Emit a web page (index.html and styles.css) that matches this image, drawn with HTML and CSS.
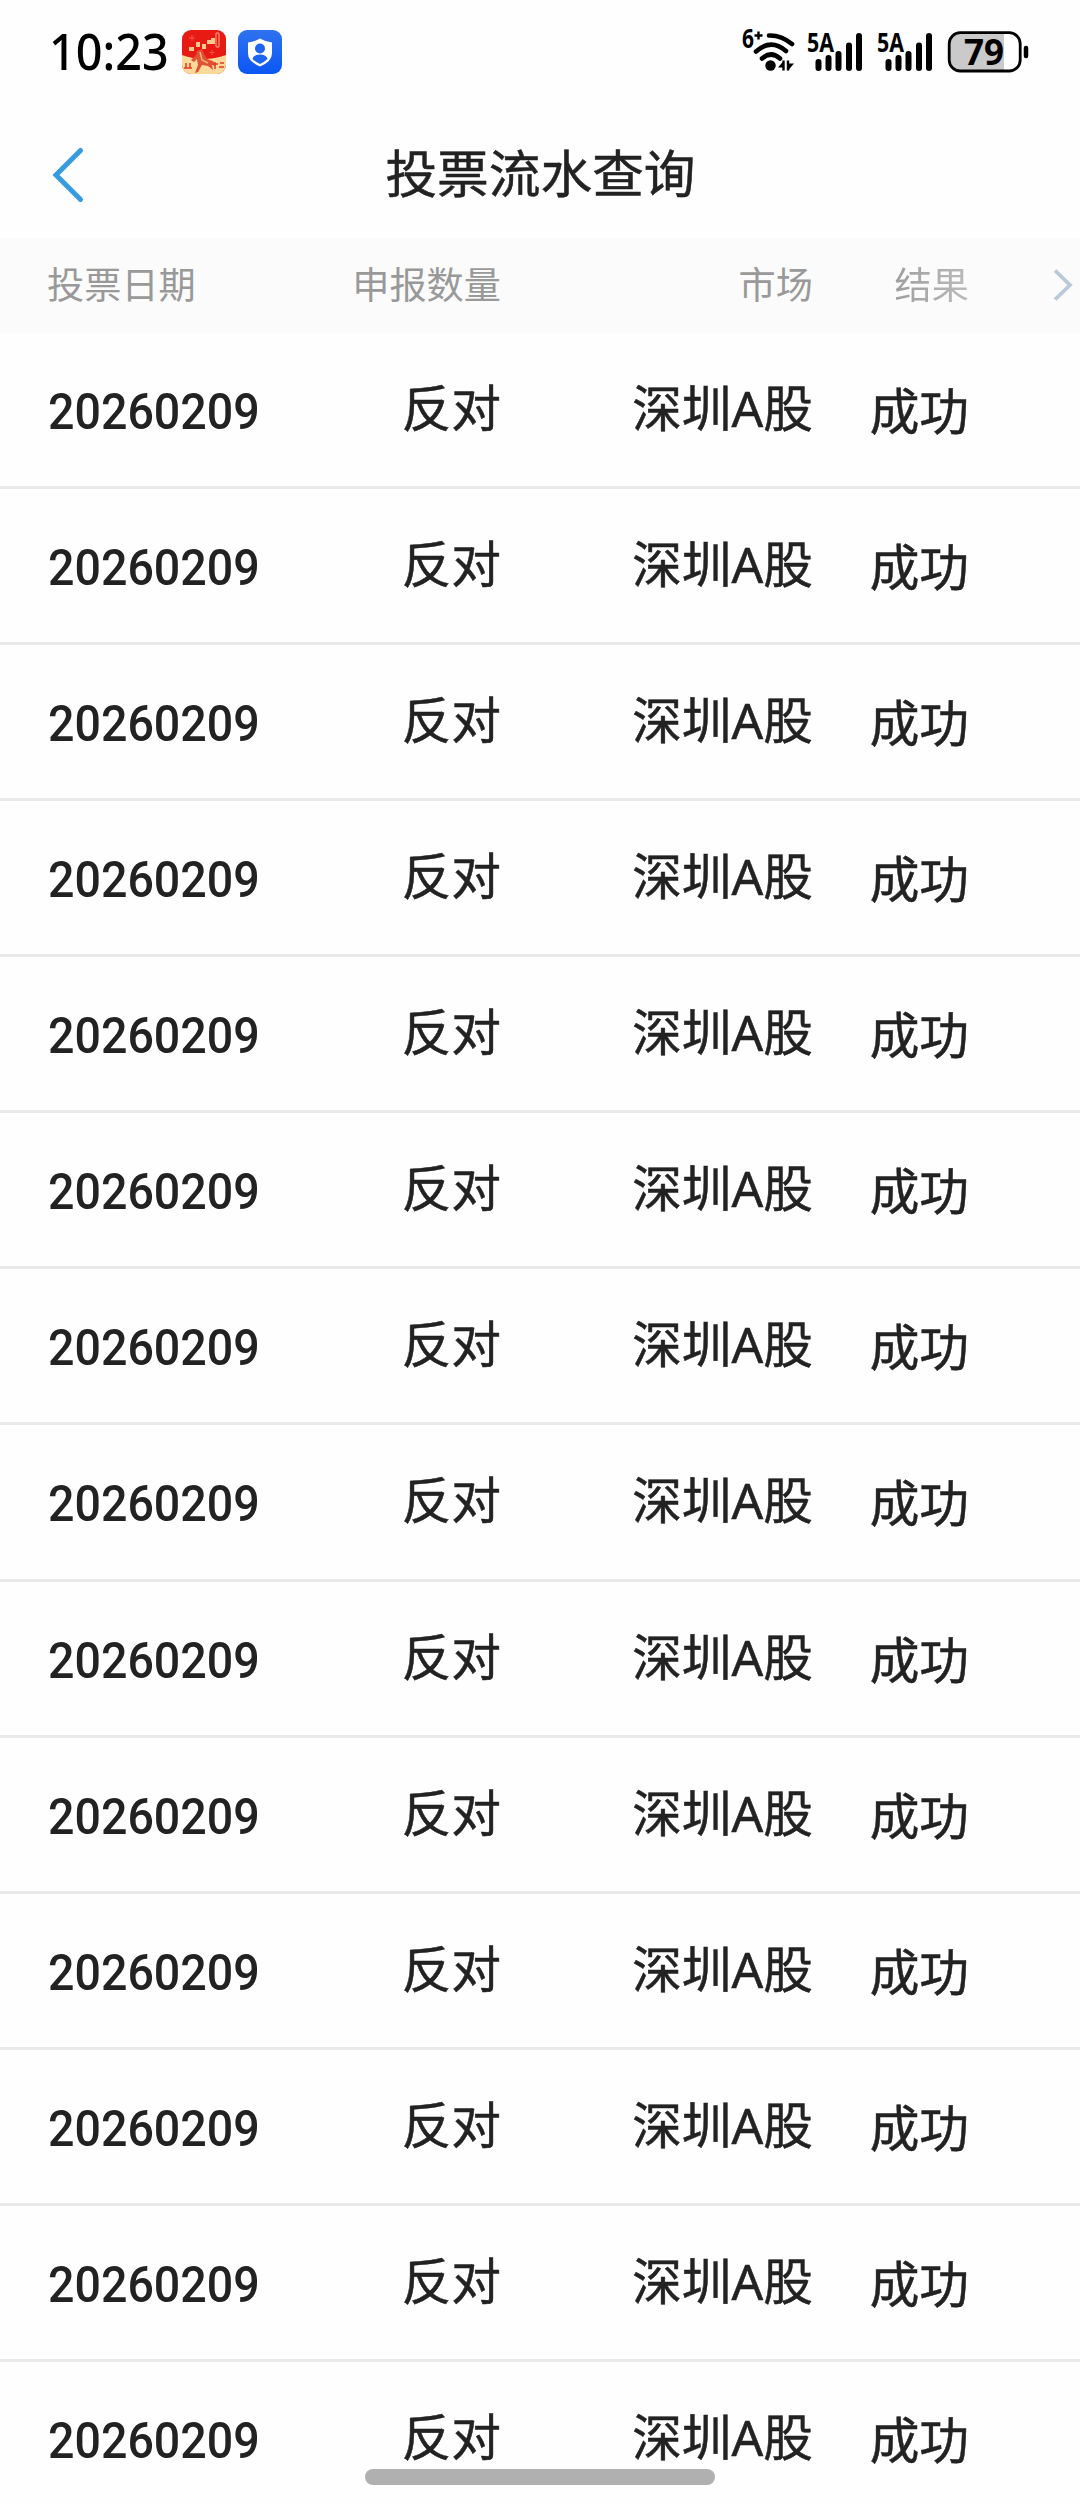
FILE: index.html
```html
<!DOCTYPE html>
<html lang="zh-CN">
<head>
<meta charset="utf-8">
<title>投票流水查询</title>
<link rel="stylesheet" href="styles.css">
</head>
<body>
<div class="screen">
  <div class="status">
    <span class="clock">10:23</span>
    <svg class="app" width="44" height="44" viewBox="0 0 44 44">
      <defs><clipPath id="r"><rect width="44" height="44" rx="9"/></clipPath></defs>
      <g clip-path="url(#r)">
        <rect width="44" height="44" fill="#e71a14"/>
        <path d="M0 25Q22 33 44 25V44H0z" fill="#fbd99a"/>
        <path d="M7 17h5v4H7zM14 12h4v5h-4zM20 14h4v5h-4zM25 10h4v4h-4zM29 8h4v6h-4z" fill="#f8c98c"/>
        <rect x="34" y="3" width="3" height="14" rx="1" fill="none" stroke="#f98a70" stroke-width="1.3"/>
        <path d="M10 5v6M7 8h6M30 20v5M27.500 22.500h5" stroke="#f4564a"/>
        <path d="M15 21l5-2 2 5 3 5 6 2 3 5-4-1 1 5-5-4-6-1-4 7-3 1 3-8-1-6-3 3-3-2 5-5z" fill="#df5235"/>
        <path d="M18 22l2 8 6 3" fill="none" stroke="#ffb170" stroke-width="1.500"/>
        <path d="M4 33v5M2 38h8M8 33v5M31 34h5M33 32v7M38 33h4M37 37h5" stroke="#e43a25" stroke-width="1.500"/>
      </g>
    </svg>
    <svg class="app" width="44" height="44" viewBox="0 0 44 44">
      <defs><linearGradient id="b" x2="0" y2="1"><stop stop-color="#2f72ef"/><stop offset="1" stop-color="#0b57f5"/></linearGradient></defs>
      <rect width="44" height="44" rx="9" fill="url(#b)"/>
      <path d="M22 8.500q6 3.500 12 4v11q0 8-12 13-12-5-12-13v-11q6-.5 12-4z" fill="#fff"/>
      <circle cx="22" cy="18.500" r="5" fill="#1c65f2"/>
      <path d="M14.500 29q1-4.500 7.500-4.500t7.500 4.500q-3 3-7.500 5-4.500-2-7.500-5z" fill="#1c65f2"/>
    </svg>
    <svg class="signals" width="310" height="66" viewBox="740 10 310 66">
      <g fill="none" stroke="#000" stroke-width="4.600" stroke-linecap="round">
        <path d="M769 35.500Q781 35 792 44M756 51.500Q771 38 786 51M762 58.500Q771 50.500 780 58.500"/>
      </g>
      <circle cx="770.500" cy="65.500" r="5.200"/>
      <path d="M783.500 60.500v10M788 60.500v10" stroke="#000" stroke-width="2.400"/>
      <path d="M784 60.500v7h-6zM788 63.500h6l-6 7z"/>
      <text class="tag" x="742" y="48" textLength="12" lengthAdjust="spacingAndGlyphs">6</text>
      <path d="M754.500 35.500h8M758.500 31.500v8" stroke="#000" stroke-width="2.400"/>
      <g id="cell">
        <text class="tag" x="807" y="51.500" textLength="27" lengthAdjust="spacingAndGlyphs">5A</text>
        <path d="M818.500 62v6M828.500 58v10M838.500 54v14M849 45.500v22.500M859 36v32" stroke="#000" stroke-width="6" stroke-linecap="round"/>
      </g>
      <use href="#cell" x="70"/>
      <path d="M960 33h44v38h-44q-11 0-11-11V44q0-11 11-11z" fill="#cacaca"/>
      <rect x="949.200" y="32.700" width="71" height="38.300" rx="11" fill="none" stroke="#000" stroke-width="2.800"/>
      <path d="M1026 48v8" stroke="#000" stroke-width="4.500" stroke-linecap="round"/>
      <text class="level" x="964" y="65" textLength="40" lengthAdjust="spacingAndGlyphs">79</text>
    </svg>
  </div>
  <header class="nav">
    <svg class="back" width="36" height="60" viewBox="0 0 36 60"><path d="M30.500 5.500L6 30 30.500 54.500" fill="none" stroke="#379be0" stroke-width="5" stroke-linecap="round"/></svg>
    <h1>投票流水查询</h1>
  </header>
  <div class="row head">
    <span>投票日期</span><span class="num">申报数量</span><span class="num">市场</span><span class="num result">结果</span>
    <svg class="more" width="22" height="34" viewBox="0 0 22 34"><path d="M2 2.500L17 17 2 31.500" fill="none" stroke="#b9c9da" stroke-width="3.800"/></svg>
  </div>
  <main class="list" id="list"></main>
  <div class="homebar"></div>
</div>
<script src="app.js"></script>
</body>
</html>
```
FILE: styles.css
```css
* { box-sizing: border-box; }
body { margin: 0; background: #fff; }
.screen {
  position: relative;
  width: 1080px;
  height: 2504px;
  overflow: hidden;
  background: #fefefe;
  color: #222;
  font-family: "Noto Sans CJK SC", sans-serif;
}
.status { display: flex; height: 120px; padding: 0 30px 0 49px; color: #000; }
.clock { width: 133px; font: 500 50px/50px "Noto Sans", sans-serif; padding-top: 26px; white-space: nowrap; transform: scaleX(.935); transform-origin: left; }
.app { margin: 30px 12px 0 0; flex: none; }
.signals { margin: 10px 0 0 auto; flex: none; }
.tag { font: 700 26px "Noto Sans", sans-serif; }
.level { font: 700 35px "Open Sans", sans-serif; }
.nav { display: flex; justify-content: center; align-items: center; position: relative; height: 119px; }
.nav h1 { margin: -17px 0 0 1px; font-size: 51.7px; line-height: 76px; font-weight: 400; -webkit-text-stroke: .5px #222; }
.back { position: absolute; left: 50px; top: 25px; }
.row {
  display: grid;
  grid-template-columns: 253px 200px 312px 156px 1fr;
  align-items: center;
  height: 156.070px;
  padding-left: 48px;
  border-bottom: 3px solid #e9e9e9;
  font-size: 49.7px;
  line-height: 72px;
  white-space: nowrap;
}
.num { text-align: right; margin-top: -3px; }
.list .num { -webkit-text-stroke: .5px #222; }
.head { height: 94px; border: 0; background: #fbfbfb; color: #999; font-size: 37.2px; }
.head span { margin-top: -7px; }
.head span:first-child { margin-left: -1px; }
.result { background: linear-gradient(90deg, #999 45%, #bbb); background-clip: text; color: transparent; }
.more { justify-self: end; margin: -2px 5px 0 0; }
.date { font: 500 50.5px/72px Roboto, sans-serif; transform: scaleX(.922); transform-origin: left; padding-top: 5px; }
.list .raised { margin-top: -9px; }
.latin { font-family: "Noto Sans", sans-serif; line-height: 1; }
.homebar { position: absolute; left: 365px; top: 2469px; width: 350px; height: 16px; border-radius: 8px; background: #b0b0b0; }
```
FILE: app.js
```js
const records = Array.from({ length: 14 }, () => ["20260209", "反对", '深圳<span class="latin">A</span>股', "成功"]);
document.getElementById("list").innerHTML = records.map(([date, vote, market, result]) =>
  `<div class="row"><span class="date">${date}</span><span class="num raised">${vote}</span>` +
  `<span class="num raised">${market}</span><span class="num">${result}</span></div>`).join("");
```
